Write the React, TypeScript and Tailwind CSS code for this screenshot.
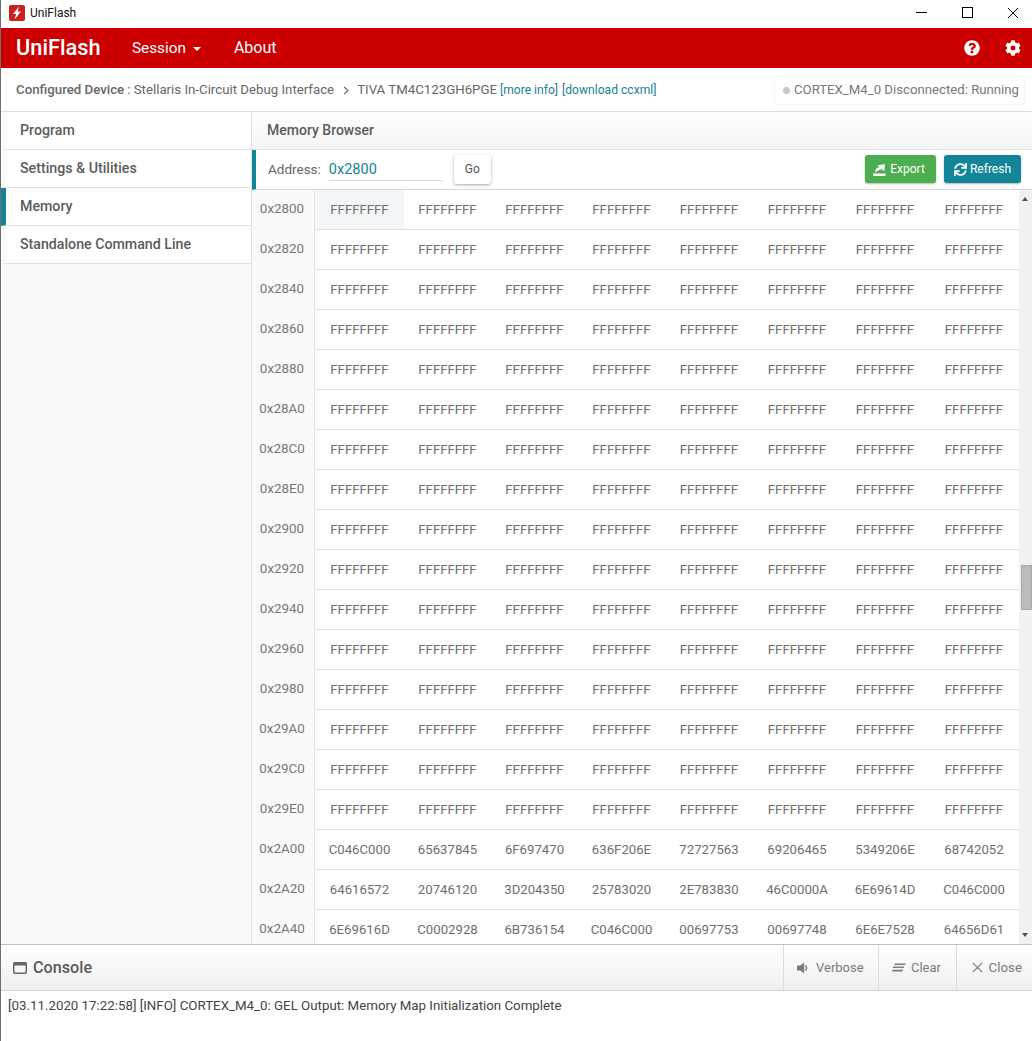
import { FaCog, FaQuestionCircle, FaSync } from "react-icons/fa";

const FILL = ["FFFFFFFF", "FFFFFFFF", "FFFFFFFF", "FFFFFFFF", "FFFFFFFF", "FFFFFFFF", "FFFFFFFF", "FFFFFFFF"];

const rows: { addr: string; cells: string[] }[] = [
  ...["0x2800", "0x2820", "0x2840", "0x2860", "0x2880", "0x28A0", "0x28C0", "0x28E0", "0x2900", "0x2920", "0x2940", "0x2960", "0x2980", "0x29A0", "0x29C0", "0x29E0"].map(
    (addr) => ({ addr, cells: FILL }),
  ),
  { addr: "0x2A00", cells: ["C046C000", "65637845", "6F697470", "636F206E", "72727563", "69206465", "5349206E", "68742052"] },
  { addr: "0x2A20", cells: ["64616572", "20746120", "3D204350", "25783020", "2E783830", "46C0000A", "6E69614D", "C046C000"] },
  { addr: "0x2A40", cells: ["6E69616D", "C0002928", "6B736154", "C046C000", "00697753", "00697748", "6E6E7528", "64656D61"] },
];

const navItems = ["Program", "Settings & Utilities", "Memory", "Standalone Command Line"];

function TitleBar() {
  return (
    <div className="flex h-[28px] items-center bg-white">
      <svg width="16" height="16" viewBox="0 0 16 16" className="ml-[8px] mt-[-3px]">
        <rect width="16" height="16" rx="2" fill="#cc2020" />
        <path d="M10 1.5 4 9h3.2l-1.7 5.5L12 6.6H8.6z" fill="#fff" />
      </svg>
      <span className="ml-[5px] mt-[-3px] text-[12px] text-[#111]">UniFlash</span>
      <div className="ml-auto flex items-center">
        <svg width="11" height="11" viewBox="0 0 11 11" className="mr-[35px] mt-[-3px]">
          <path d="M0 5.5h11" stroke="#000" strokeWidth="1" />
        </svg>
        <svg width="11" height="11" viewBox="0 0 11 11" className="mr-[34px] mt-[-3px]">
          <rect x="0.5" y="0.5" width="10" height="10" fill="none" stroke="#000" />
        </svg>
        <svg width="12" height="12" viewBox="0 0 12 12" className="mr-[13px] mt-[-3px]">
          <path d="M1 1l10 10M11 1 1 11" stroke="#000" strokeWidth="1" />
        </svg>
      </div>
    </div>
  );
}

function RedBar() {
  return (
    <div className="flex h-[40px] items-center bg-[#cc0000] text-white">
      <div className="flex h-full w-[115px] items-center border-r border-[#b80000] pl-[15px] text-[21.8px] font-medium">UniFlash</div>
      <div className="ml-[16px] flex items-center text-[15.3px]">
        Session
        <span className="ml-[7px] mt-[1px] h-0 w-0 border-x-[4.5px] border-t-[4.5px] border-x-transparent border-t-white" />
      </div>
      <div className="ml-[33px] text-[16px]">About</div>
      <FaQuestionCircle className="ml-auto mr-[25px] text-[16px]" />
      <FaCog className="mr-[11px] text-[16px]" />
    </div>
  );
}

function DeviceBar() {
  return (
    <div className="flex h-[44px] items-center border-b border-[#dcdcdc] bg-white pl-[15px] pt-[1px] text-[13.25px] text-[#666]">
      <span className="font-medium">Configured Device</span>
      <span className="ml-[3px]">: Stellaris In-Circuit Debug Interface</span>
      <svg width="6" height="9" viewBox="0 0 6 9" className="ml-[9px]">
        <path d="M1 .8 5 4.5 1 8.2" fill="none" stroke="#666" strokeWidth="1.1" />
      </svg>
      <span className="ml-[8px]">TIVA TM4C123GH6PGE</span>
      <span className="ml-[3px] text-[12.1px] text-[#1b7f95]">[more info]</span>
      <span className="ml-[4px] text-[12.1px] text-[#1b7f95]">[download ccxml]</span>
      <div className="ml-auto mr-[7px] flex h-[29px] items-center rounded-[4px] border border-[#f6f6f6] pl-[8px] pr-[5px] text-[13.2px] text-[#777]">
        <span className="mr-[4px] h-[7px] w-[7px] rounded-full bg-[#c8c8c8]" />
        CORTEX_M4_0 Disconnected: Running
      </div>
    </div>
  );
}

function Sidebar() {
  return (
    <div className="w-[251px] shrink-0 border-r border-[#e2e2e2] bg-[#fafafa]">
      {navItems.map((item) => (
        <div
          key={item}
          className={`flex h-[38px] items-center border-b border-[#e0e0e0] bg-white pl-[14px] pt-[1px] text-[14.2px] font-medium text-[#5c5c5c] ${
            item === "Memory" ? "border-l-[5px] border-l-[#128598]" : "border-l-[5px] border-l-[#fafafa]"
          }`}
        >
          {item}
        </div>
      ))}
    </div>
  );
}

function Toolbar() {
  return (
    <div className="flex h-[40px] shrink-0 items-center border-b border-[#d8d8d8] border-l-[4px] border-l-[#128598] bg-white pb-[1px] shadow-[0_1px_1px_rgba(0,0,0,0.08)]">
      <span className="ml-[12px] text-[13.5px] text-[#666]">Address:</span>
      <div className="ml-[8px] flex h-[24px] w-[115px] items-center border-b border-[#ddd] pt-[2px] text-[14.5px] text-[#128598]">0x2800</div>
      <button className="ml-[10px] h-[29px] w-[37px] rounded-[3px] bg-white text-[12px] text-[#555] shadow-[0_1px_3px_rgba(0,0,0,0.35)]">Go</button>
      <button className="ml-auto flex h-[28px] w-[71px] items-center justify-center rounded-[3px] bg-[#4cae4f] pr-[3px] text-[12px] text-white shadow-[0_1px_2px_rgba(0,0,0,0.3)]">
        <svg width="13" height="13" viewBox="0 0 13 13" className="mr-[4px]">
          <path d="M0 10.4h12.5V13H0zM2.2 9.6c-.2-3 1.5-5 4-5.5L4.6 2.2 12 1.2l-.7 7.2-2-2.1C7 6.6 4.6 7.6 2.2 9.6z" fill="#fff" />
        </svg>
        Export
      </button>
      <button className="ml-[8px] mr-[11px] flex h-[28px] w-[77px] items-center justify-center rounded-[3px] bg-[#128598] text-[12px] text-white shadow-[0_1px_2px_rgba(0,0,0,0.3)]">
        <FaSync className="mr-[3px] text-[13px]" />
        Refresh
      </button>
    </div>
  );
}

function MemoryTable() {
  return (
    <div className="flex min-h-0 flex-1 overflow-hidden">
      <div className="min-w-0 flex-1">
        {rows.map((row, r) => (
          <div key={row.addr} className="flex h-[40px]">
            <div className="flex w-[63px] shrink-0 items-center justify-center border-r border-[#e2e2e2] bg-[#fafafa] pb-[2px] pr-[2px] text-[13.4px] text-[#777]">
              {row.addr}
            </div>
            <div className="grid min-w-0 flex-1 grid-cols-[89px_87px_87px_87px_88px_88px_88px_90px] border-b border-[#e0e0e0] bg-white">
              {row.cells.map((cell, c) => (
                <div
                  key={c}
                  className={`flex items-center justify-center text-[13.2px] text-[#6e6e6e] ${r === 0 && c === 0 ? "bg-[#f2f6f9]" : ""}`}
                >
                  {cell}
                </div>
              ))}
            </div>
          </div>
        ))}
      </div>
      <div className="relative w-[13px] shrink-0 bg-[#f1f1f1]">
        <span className="absolute left-[3px] top-[7px] h-0 w-0 border-x-[3.5px] border-b-[4px] border-x-transparent border-b-[#505050]" />
        <div className="absolute left-[2px] top-[375px] h-[45px] w-[11px] border border-[#a8a8a8] bg-[#bcbcbc]" />
        <span className="absolute bottom-[7px] left-[3px] h-0 w-0 border-x-[3.5px] border-t-[4px] border-x-transparent border-t-[#505050]" />
      </div>
    </div>
  );
}

function ConsolePanel() {
  return (
    <div className="shrink-0 border-t border-[#c0c0c0]">
      <div className="flex h-[46px] items-stretch border-b border-[#d4d4d4] bg-gradient-to-b from-white to-[#efefef] text-[#7a7a7a]">
        <div className="flex flex-1 items-center pl-[12px] pt-[1px] text-[16.2px] font-medium text-[#5a5a5a]">
          <svg width="14" height="12" viewBox="0 0 14 12" className="mr-[6px]">
            <rect x="0.75" y="0.75" width="12.5" height="10.5" rx="1" fill="none" stroke="#666" strokeWidth="1.5" />
            <rect x="1" y="1" width="12" height="2.5" fill="#666" />
          </svg>
          Console
        </div>
        <div className="flex w-[95px] items-center justify-start border-l border-[#dcdcdc] pl-[13px] text-[13px]">
          <svg width="12" height="12" viewBox="0 0 12 12" className="mr-[7px]">
            <path d="M0 3.6h3L7.2.8v10.4L3 8.4H0z" fill="#7a7a7a" />
            <path d="M8.6 3.4c1.2 1.5 1.2 3.7 0 5.2" fill="none" stroke="#7a7a7a" strokeWidth="1.4" />
          </svg>
          Verbose
        </div>
        <div className="flex w-[78px] items-center justify-start border-l border-[#dcdcdc] pl-[13px] text-[13px]">
          <svg width="14" height="9" viewBox="0 0 14 9" className="mr-[5px]">
            <path d="M3 .5h11l-1 1.4H2zM1.5 3.6h11l-1 1.4H.5zM.8 6.8h10.5l-1 1.6H0z" fill="#7a7a7a" />
          </svg>
          Clear
        </div>
        <div className="flex w-[76px] items-center justify-end border-l border-[#dcdcdc] pr-[10px] text-[13.3px]">
          <svg width="11" height="11" viewBox="0 0 11 11" className="mr-[6px]">
            <path d="M.8.8l9.4 9.4M10.2.8.8 10.2" stroke="#7a7a7a" strokeWidth="1.2" />
          </svg>
          Close
        </div>
      </div>
      <div className="h-[50px] bg-white pl-[7px] pt-[7px] text-[13.3px] leading-[16px] text-[#444]">
        [03.11.2020 17:22:58] [INFO] CORTEX_M4_0: GEL Output: Memory Map Initialization Complete
      </div>
    </div>
  );
}

export default function App() {
  return (
    <div className="flex h-[1041px] w-[1032px] flex-col overflow-hidden border-l border-[#707070] bg-white font-['Roboto',sans-serif]">
      <TitleBar />
      <RedBar />
      <DeviceBar />
      <div className="flex min-h-0 flex-1">
        <Sidebar />
        <div className="flex min-w-0 flex-1 flex-col">
          <div className="flex h-[38px] shrink-0 items-center border-b border-[#e2e2e2] bg-gradient-to-b from-white to-[#f5f5f5] pl-[15px] text-[14px] font-medium text-[#5c5c5c]">
            Memory Browser
          </div>
          <Toolbar />
          <MemoryTable />
        </div>
      </div>
      <ConsolePanel />
    </div>
  );
}
